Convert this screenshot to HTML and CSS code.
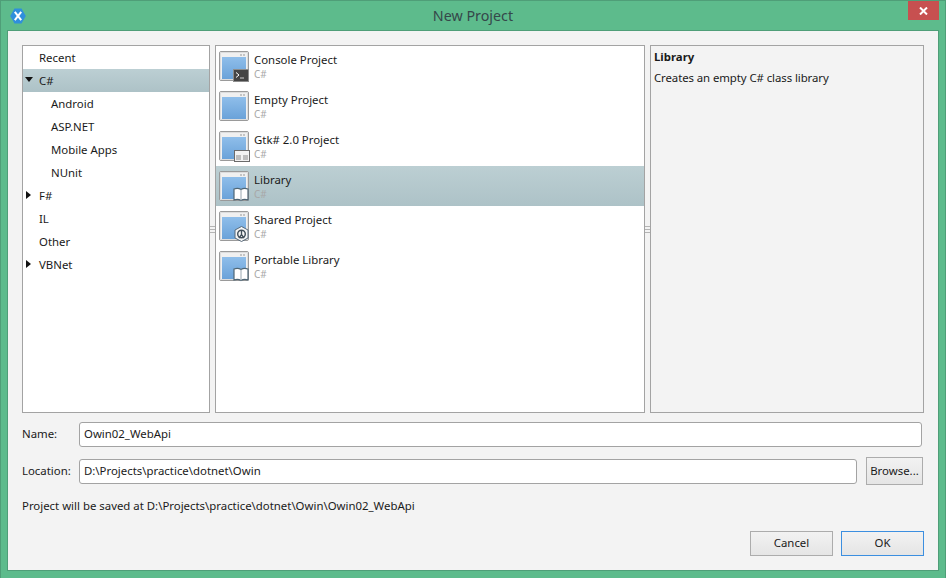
FILE: index.html
```html
<!DOCTYPE html>
<html lang="en">

<head>
    <meta charset="UTF-8">
    <title>New Project</title>
    <link rel="stylesheet" href="styles.css">
</head>

<body>
    <svg class="defs" width="0" height="0">
        <defs>
            <linearGradient id="blue" x1="0" y1="0" x2="0" y2="1">
                <stop offset="0" stop-color="#8fbeea" />
                <stop offset="1" stop-color="#6aa2d9" />
            </linearGradient>
            <symbol id="win" viewBox="0 0 30 30">
                <rect x="0.500" y="0.500" width="29" height="29" rx="1.500" fill="#f0f0f0" stroke="#9a9a9a" />
                <rect x="1.500" y="1.500" width="27" height="27" fill="none" stroke="#dcdcdc" />
                <rect x="3" y="6" width="24" height="22" fill="url(#blue)" />
                <rect x="21" y="3" width="2" height="2" fill="#c4c4c4" />
                <rect x="24" y="3" width="2" height="2" fill="#c4c4c4" />
            </symbol>
            <symbol id="book" viewBox="0 0 16 15">
                <path d="M1 2Q5 .5 8 2.500Q11 .5 15 2V13Q11 11.500 8 13.500Q5 11.500 1 13Z" fill="#fff" stroke="#4f6675" stroke-width="1.200" />
                <path d="M8 2.500V13.500" stroke="#9aa7b0" />
            </symbol>
        </defs>
    </svg>

    <div class="window">
        <!-- title bar -->
        <div class="titlebar">
            <svg class="logo" width="16" height="16" viewBox="0 0 16 16">
                <path d="M4.500 .6H11.500L15.800 8L11.500 15.400H4.500L.2 8Z" fill="#2f8fdc" />
                <path d="M4.800 3.800L11.200 12.200M11.200 3.800L4.800 12.200" stroke="#fff" stroke-width="2" />
            </svg>
            <span class="title">New Project</span>
            <div class="close">
                <svg width="9" height="8" viewBox="0 0 9 8">
                    <path d="M1 .5L8 7.500M8 .5L1 7.500" stroke="#fff" stroke-width="2" />
                </svg>
            </div>
        </div>

        <div class="client">
            <!-- three panes -->
            <div class="panes">
                <div class="pane categories">
                    <div class="cat">Recent</div>
                    <div class="cat selected"><span class="arrow open"></span>C#</div>
                    <div class="cat sub">Android</div>
                    <div class="cat sub">ASP.NET</div>
                    <div class="cat sub">Mobile Apps</div>
                    <div class="cat sub">NUnit</div>
                    <div class="cat"><span class="arrow"></span>F#</div>
                    <div class="cat">IL</div>
                    <div class="cat">Other</div>
                    <div class="cat"><span class="arrow"></span>VBNet</div>
                </div>

                <div class="grip"><span></span></div>

                <div class="pane templates">
                    <div class="tpl">
                        <div class="icon">
                            <svg class="base"><use href="#win" /></svg>
                            <svg class="badge" width="16" height="13" viewBox="0 0 16 13">
                                <rect x="0.500" y="0.500" width="15" height="12" fill="#454545" stroke="#8c8c8c" />
                                <path d="M3 3.500L6 6L3 8.500" fill="none" stroke="#fff" />
                                <path d="M7 9H11" stroke="#cfcfcf" />
                            </svg>
                        </div>
                        <div class="tpl-text">
                            <div class="tpl-name">Console Project</div>
                            <div class="tpl-lang">C#</div>
                        </div>
                    </div>
                    <div class="tpl">
                        <div class="icon">
                            <svg class="base"><use href="#win" /></svg>
                        </div>
                        <div class="tpl-text">
                            <div class="tpl-name">Empty Project</div>
                            <div class="tpl-lang">C#</div>
                        </div>
                    </div>
                    <div class="tpl">
                        <div class="icon">
                            <svg class="base"><use href="#win" /></svg>
                            <svg class="badge badge-wide" width="16" height="12" viewBox="0 0 16 12">
                                <rect x="0.500" y="0.500" width="15" height="11" fill="#f2f2f2" stroke="#6b6b6b" />
                                <rect x="2" y="5" width="5" height="5" fill="#bdbdbd" />
                                <rect x="9" y="5" width="5" height="5" fill="#bdbdbd" />
                            </svg>
                        </div>
                        <div class="tpl-text">
                            <div class="tpl-name">Gtk# 2.0 Project</div>
                            <div class="tpl-lang">C#</div>
                        </div>
                    </div>
                    <div class="tpl selected">
                        <div class="icon">
                            <svg class="base"><use href="#win" /></svg>
                            <svg class="badge" width="16" height="15"><use href="#book" /></svg>
                        </div>
                        <div class="tpl-text">
                            <div class="tpl-name">Library</div>
                            <div class="tpl-lang">C#</div>
                        </div>
                    </div>
                    <div class="tpl">
                        <div class="icon">
                            <svg class="base"><use href="#win" /></svg>
                            <svg class="badge" width="15" height="16" viewBox="0 0 15 16">
                                <path d="M7.500 .5L14 4V12L7.500 15.500L1 12V4Z" fill="#f5f5f5" stroke="#56697a" />
                                <circle cx="7.500" cy="8" r="3.800" fill="none" stroke="#3f4c57" stroke-width="1.400" />
                                <path d="M7.500 4V8.500M5 12L7.500 8.500L10 12" fill="none" stroke="#3f4c57" stroke-width="1.300" />
                            </svg>
                        </div>
                        <div class="tpl-text">
                            <div class="tpl-name">Shared Project</div>
                            <div class="tpl-lang">C#</div>
                        </div>
                    </div>
                    <div class="tpl">
                        <div class="icon">
                            <svg class="base"><use href="#win" /></svg>
                            <svg class="badge" width="16" height="15"><use href="#book" /></svg>
                        </div>
                        <div class="tpl-text">
                            <div class="tpl-name">Portable Library</div>
                            <div class="tpl-lang">C#</div>
                        </div>
                    </div>
                </div>

                <div class="grip"><span></span></div>

                <div class="pane details">
                    <div class="details-title">Library</div>
                    <div class="details-text">Creates an empty C# class library</div>
                </div>
            </div>

            <!-- name and location -->
            <div class="form-row name-row">
                <label class="form-label">Name:</label>
                <div class="field">Owin02_WebApi</div>
            </div>
            <div class="form-row location-row">
                <label class="form-label">Location:</label>
                <div class="field">D:\Projects\practice\dotnet\Owin</div>
                <button class="btn browse">Browse...</button>
            </div>
            <div class="saved-at">Project will be saved at D:\Projects\practice\dotnet\Owin\Owin02_WebApi</div>

            <!-- dialog buttons -->
            <div class="actions">
                <button class="btn action">Cancel</button>
                <button class="btn action default">OK</button>
            </div>
        </div>
    </div>
</body>

</html>
```

FILE: styles.css
```css
body {
    margin: 0;
    font-family: "Noto Sans", "Open Sans", sans-serif;
    font-size: 11.4px;
    color: #1a1a1a;
    background: #5dbb8c;
}

.defs {
    position: absolute;
}

/* window frame */
.window {
    width: 946px;
    height: 578px;
    box-sizing: border-box;
    border: 1px solid #4f9e78;
    border-bottom: 0;
    padding: 0 6px 7px 6px;
    background: #5dbb8c;
    display: flex;
    flex-direction: column;
}

.titlebar {
    height: 29px;
    margin: 0 -6px;
    padding-left: 9px;
    display: flex;
    align-items: flex-start;
    position: relative;
}

.logo {
    margin-top: 7px;
}

.title {
    position: absolute;
    left: 0;
    right: 0;
    top: 5px;
    text-align: center;
    font-size: 14.300px;
    color: #35474a;
}

.close {
    position: absolute;
    right: 6px;
    top: 0;
    width: 31px;
    height: 19px;
    background: #c75050;
    display: flex;
    align-items: center;
    justify-content: center;
}

.client {
    flex: 1;
    background: #f3f3f3;
    border: 1px solid #4f9e78;
    padding: 14px 14px 0 14px;
}

/* panes */
.panes {
    display: flex;
    height: 368px;
}

.pane {
    box-sizing: border-box;
    border: 1px solid #a3a3a3;
    background: #fff;
    height: 100%;
}

.categories {
    width: 188px;
}

.templates {
    width: 430px;
}

.details {
    width: 274px;
    background: #f3f3f3;
    padding: 3px 3px;
}

.details-title {
    font-weight: bold;
    margin-bottom: 6px;
}

.details-text {
    letter-spacing: -0.08px;
}

.grip {
    width: 5px;
    display: flex;
    align-items: center;
    justify-content: center;
}

.grip span {
    width: 5px;
    height: 7px;
    background: repeating-linear-gradient(#b4b4b4 0 1px, transparent 1px 3px);
}

.cat {
    height: 23px;
    line-height: 23px;
    padding-left: 16px;
    position: relative;
}

.cat.sub {
    padding-left: 28px;
}

.selected {
    background: linear-gradient(#bccfd3, #adc2c7);
}

.arrow {
    position: absolute;
    left: 3px;
    top: 7px;
    width: 0;
    height: 0;
    border-left: 5px solid #111;
    border-top: 4px solid transparent;
    border-bottom: 4px solid transparent;
}

.arrow.open {
    left: 2px;
    top: 8px;
    border-top: 5px solid #111;
    border-left: 4px solid transparent;
    border-right: 4px solid transparent;
    border-bottom: 0;
}

.tpl {
    height: 40px;
    box-sizing: border-box;
    padding: 5px 0 0 3px;
    display: flex;
    gap: 5px;
}

.icon {
    width: 30px;
    height: 30px;
    position: relative;
}

.base {
    width: 30px;
    height: 30px;
    display: block;
}

.badge {
    position: absolute;
    right: 0;
    bottom: -1px;
}

.badge-wide {
    right: -1px;
}

.tpl-name {
    line-height: 16px;
    margin-top: 1px;
}

.tpl-lang {
    font-size: 10px;
    line-height: 12px;
    color: #a8a8a8;
}

/* form */
.form-row {
    display: flex;
    align-items: center;
}

.name-row {
    margin-top: 9px;
    width: 900px;
}

.location-row {
    margin-top: 10px;
    width: 901px;
    height: 28px;
    gap: 9px;
}

.form-label {
    width: 57px;
    flex: none;
    padding-bottom: 2px;
}

.location-row .form-label {
    margin-right: -9px;
}

.field {
    flex: 1;
    box-sizing: border-box;
    height: 25px;
    line-height: 21px;
    padding-left: 4px;
    background: #fff;
    border: 1px solid #a3a3a3;
    border-radius: 3px;
}

.btn {
    box-sizing: border-box;
    font: inherit;
    color: inherit;
    background: linear-gradient(#f2f2f2, #e5e5e5);
    border: 1px solid #acacac;
    padding: 0 0 2px 0;
}

.browse {
    width: 57px;
    height: 28px;
    flex: none;
}

.saved-at {
    margin-top: 12px;
    line-height: 18px;
}

.actions {
    margin-top: 16px;
    display: flex;
    justify-content: flex-end;
    gap: 8px;
}

.action {
    width: 83px;
    height: 25px;
}

.default {
    border-color: #3c8fe0;
}
```
